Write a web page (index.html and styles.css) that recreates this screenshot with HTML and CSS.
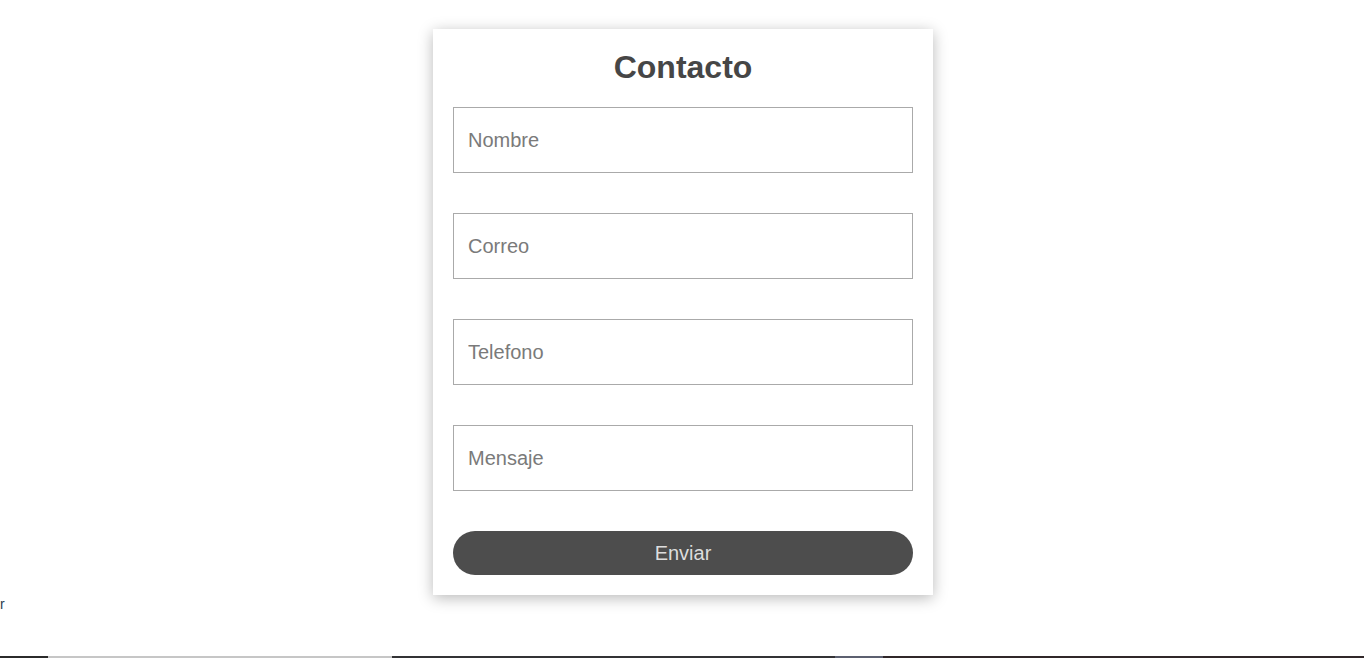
FILE: index.html
```html
<!DOCTYPE html>
<html lang="es">
<head>
<meta charset="utf-8">
<title>Contacto</title>
<link rel="stylesheet" href="styles.css">
</head>
<body>
<main class="page">
  <form class="card">
    <h2 class="title">Contacto</h2>
    <input class="field" type="text" placeholder="Nombre">
    <input class="field" type="email" placeholder="Correo">
    <input class="field" type="tel" placeholder="Telefono">
    <input class="field" type="text" placeholder="Mensaje">
    <button class="send" type="button">Enviar</button>
  </form>
</main>
<p class="note">r</p>
<footer class="strip">
  <div class="seg s1"></div>
  <div class="seg s2"></div>
  <div class="seg s3"></div>
  <div class="seg s4"></div>
  <div class="seg s5"></div>
</footer>
</body>
</html>
```
FILE: styles.css
```css
* { box-sizing: border-box; }
html, body { margin: 0; padding: 0; background: #fff; }
body { font-family: "Liberation Sans", Arial, sans-serif; }
.page {
  display: flex;
  justify-content: center;
  padding-top: 29px;
  padding-left: 2px;
}
.card {
  width: 500px;
  background: #fff;
  padding: 20px;
  display: flex;
  flex-direction: column;
  gap: 40px;
  box-shadow: 0 3px 14px rgba(0, 0, 0, 0.28);
}
.title {
  margin: 0 0 -19px 0;
  font-size: 32px;
  font-weight: bold;
  color: #464646;
  text-align: center;
  line-height: 37px;
}
.field {
  display: block;
  width: 100%;
  height: 66px;
  border: 1px solid #aaa;
  padding: 0 14px;
  font-family: "Liberation Sans", Arial, sans-serif;
  font-size: 20px;
  color: #333;
  background: #fff;
  outline: none;
}
.field::placeholder { color: #7a7a7a; }
.send {
  width: 100%;
  height: 44px;
  border: none;
  border-radius: 22px;
  background: #4d4d4d;
  color: #ddd;
  font-family: "Liberation Sans", Arial, sans-serif;
  font-size: 20px;
  padding: 0;
  cursor: pointer;
}
.note {
  margin: 0;
  padding-top: 1px;
  font-size: 14px;
  line-height: 16px;
  color: #2c3e50;
}
.strip {
  margin-top: 44px;
  display: flex;
  height: 2px;
}
.seg { height: 100%; }
.s1 { width: 48px; background: #2b2b2b; }
.s2 { width: 344px; background: #c6c6c6; }
.s3 { width: 443px; background: #333335; }
.s4 { width: 48px; background: #5c6070; }
.s5 { flex: 1; background: #302729; }
```
